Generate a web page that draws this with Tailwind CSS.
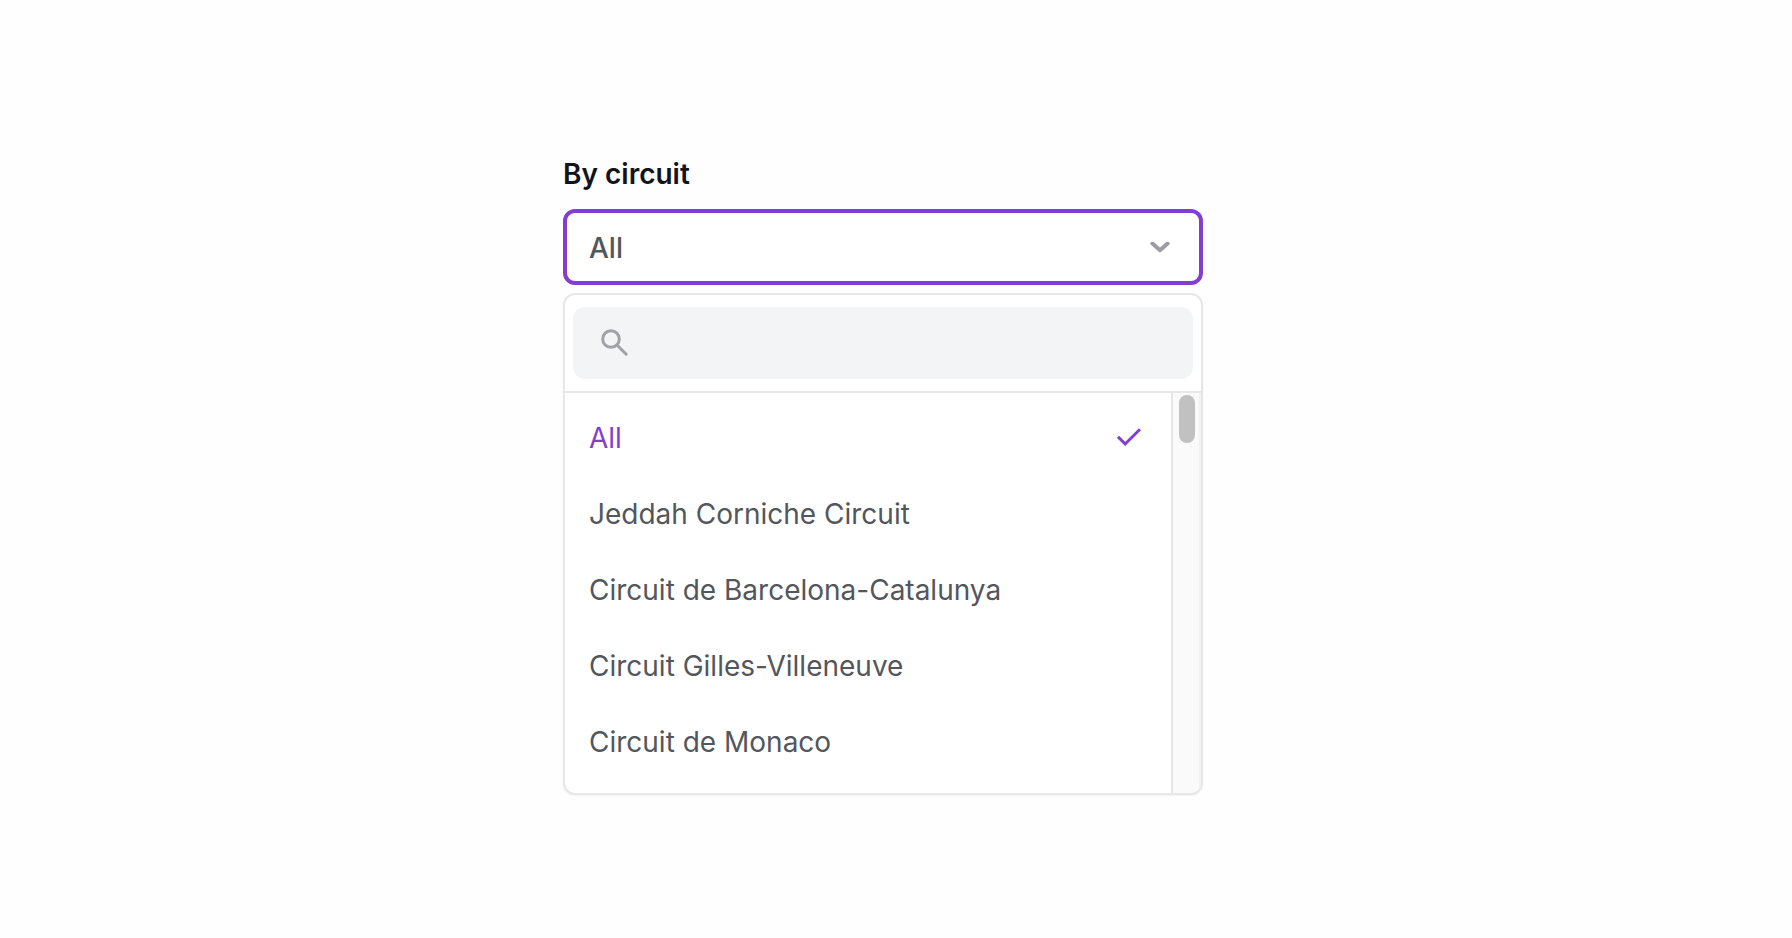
<!DOCTYPE html>
<html lang="en">
<head>
<meta charset="utf-8">
<meta name="viewport" content="width=device-width, initial-scale=1">
<title>By circuit</title>
<script src="https://cdn.jsdelivr.net/npm/@tailwindcss/browser@4"></script>
</head>
<body class="min-h-screen bg-[#fefefe] pl-6 pr-[50px] pt-[154px] pb-12 font-['Inter',sans-serif] text-[28px] leading-10 text-[#53565c]">
<main class="mx-auto w-full max-w-[640px]">
  <label id="circuit-label" for="circuit" class="block font-semibold text-[#12141d]">By circuit</label>
  <button id="circuit" type="button" aria-haspopup="listbox" aria-expanded="true" class="mt-[15px] flex w-full items-center justify-between rounded-xl border-4 border-[#843dcf] bg-white pt-[15px] pb-[13px] pl-[22px] pr-[29px] text-left font-medium">
    <span>All</span>
    <svg class="h-3 w-5 text-[#9b9ea4]" viewBox="0 0 20 12" fill="none" stroke="currentColor" stroke-width="4" stroke-linecap="round" stroke-linejoin="round" aria-hidden="true"><path d="M2.4 1.4 10 8.2 17.6 1.4"/></svg>
  </button>

  <div class="mt-2 overflow-hidden rounded-xl border-2 border-[#e6e7e8] bg-white shadow-xs">
    <div class="border-b-2 border-[#e6e7e8] px-2 py-3">
      <label class="flex h-[72px] items-center gap-4 rounded-xl bg-[#f3f4f6] px-7">
        <svg class="h-7 w-7 shrink-0 text-[#9fa2a7]" viewBox="0 0 28 28" fill="none" stroke="currentColor" stroke-width="3" stroke-linecap="round" aria-hidden="true"><circle cx="10" cy="10" r="8.3"/><path d="M16 16 25.2 25.2"/></svg>
        <input type="search" aria-label="Search circuits" class="min-w-0 flex-1 bg-transparent outline-none">
      </label>
    </div>
    <div class="flex h-[400px]">
      <ul role="listbox" aria-labelledby="circuit-label" class="min-w-0 flex-1 overflow-hidden py-[7px]">
        <li role="option" aria-selected="true" class="flex h-[76px] items-center justify-between pl-6 pr-[30px] text-[#843dcf]">
          All
          <svg class="h-5 w-6" viewBox="0 0 24 20" fill="none" stroke="currentColor" stroke-width="3" aria-hidden="true"><path d="M1 8.8 8.2 16 23 1.2"/></svg>
        </li>
        <li role="option" aria-selected="false" class="flex h-[76px] items-center px-6">Jeddah Corniche Circuit</li>
        <li role="option" aria-selected="false" class="flex h-[76px] items-center px-6">Circuit de Barcelona-Catalunya</li>
        <li role="option" aria-selected="false" class="flex h-[76px] items-center px-6">Circuit Gilles-Villeneuve</li>
        <li role="option" aria-selected="false" class="flex h-[76px] items-center px-6">Circuit de Monaco</li>
      </ul>
      <div class="w-[30px] border-x-2 border-l-[#e6e6e6] border-r-[#f1f1f1] bg-[#fafafa] px-1 pt-0.5" aria-hidden="true">
        <div class="ml-0.5 h-12 w-4 rounded-full bg-[#c1c1c1]"></div>
      </div>
    </div>
  </div>
</main>
</body>
</html>
